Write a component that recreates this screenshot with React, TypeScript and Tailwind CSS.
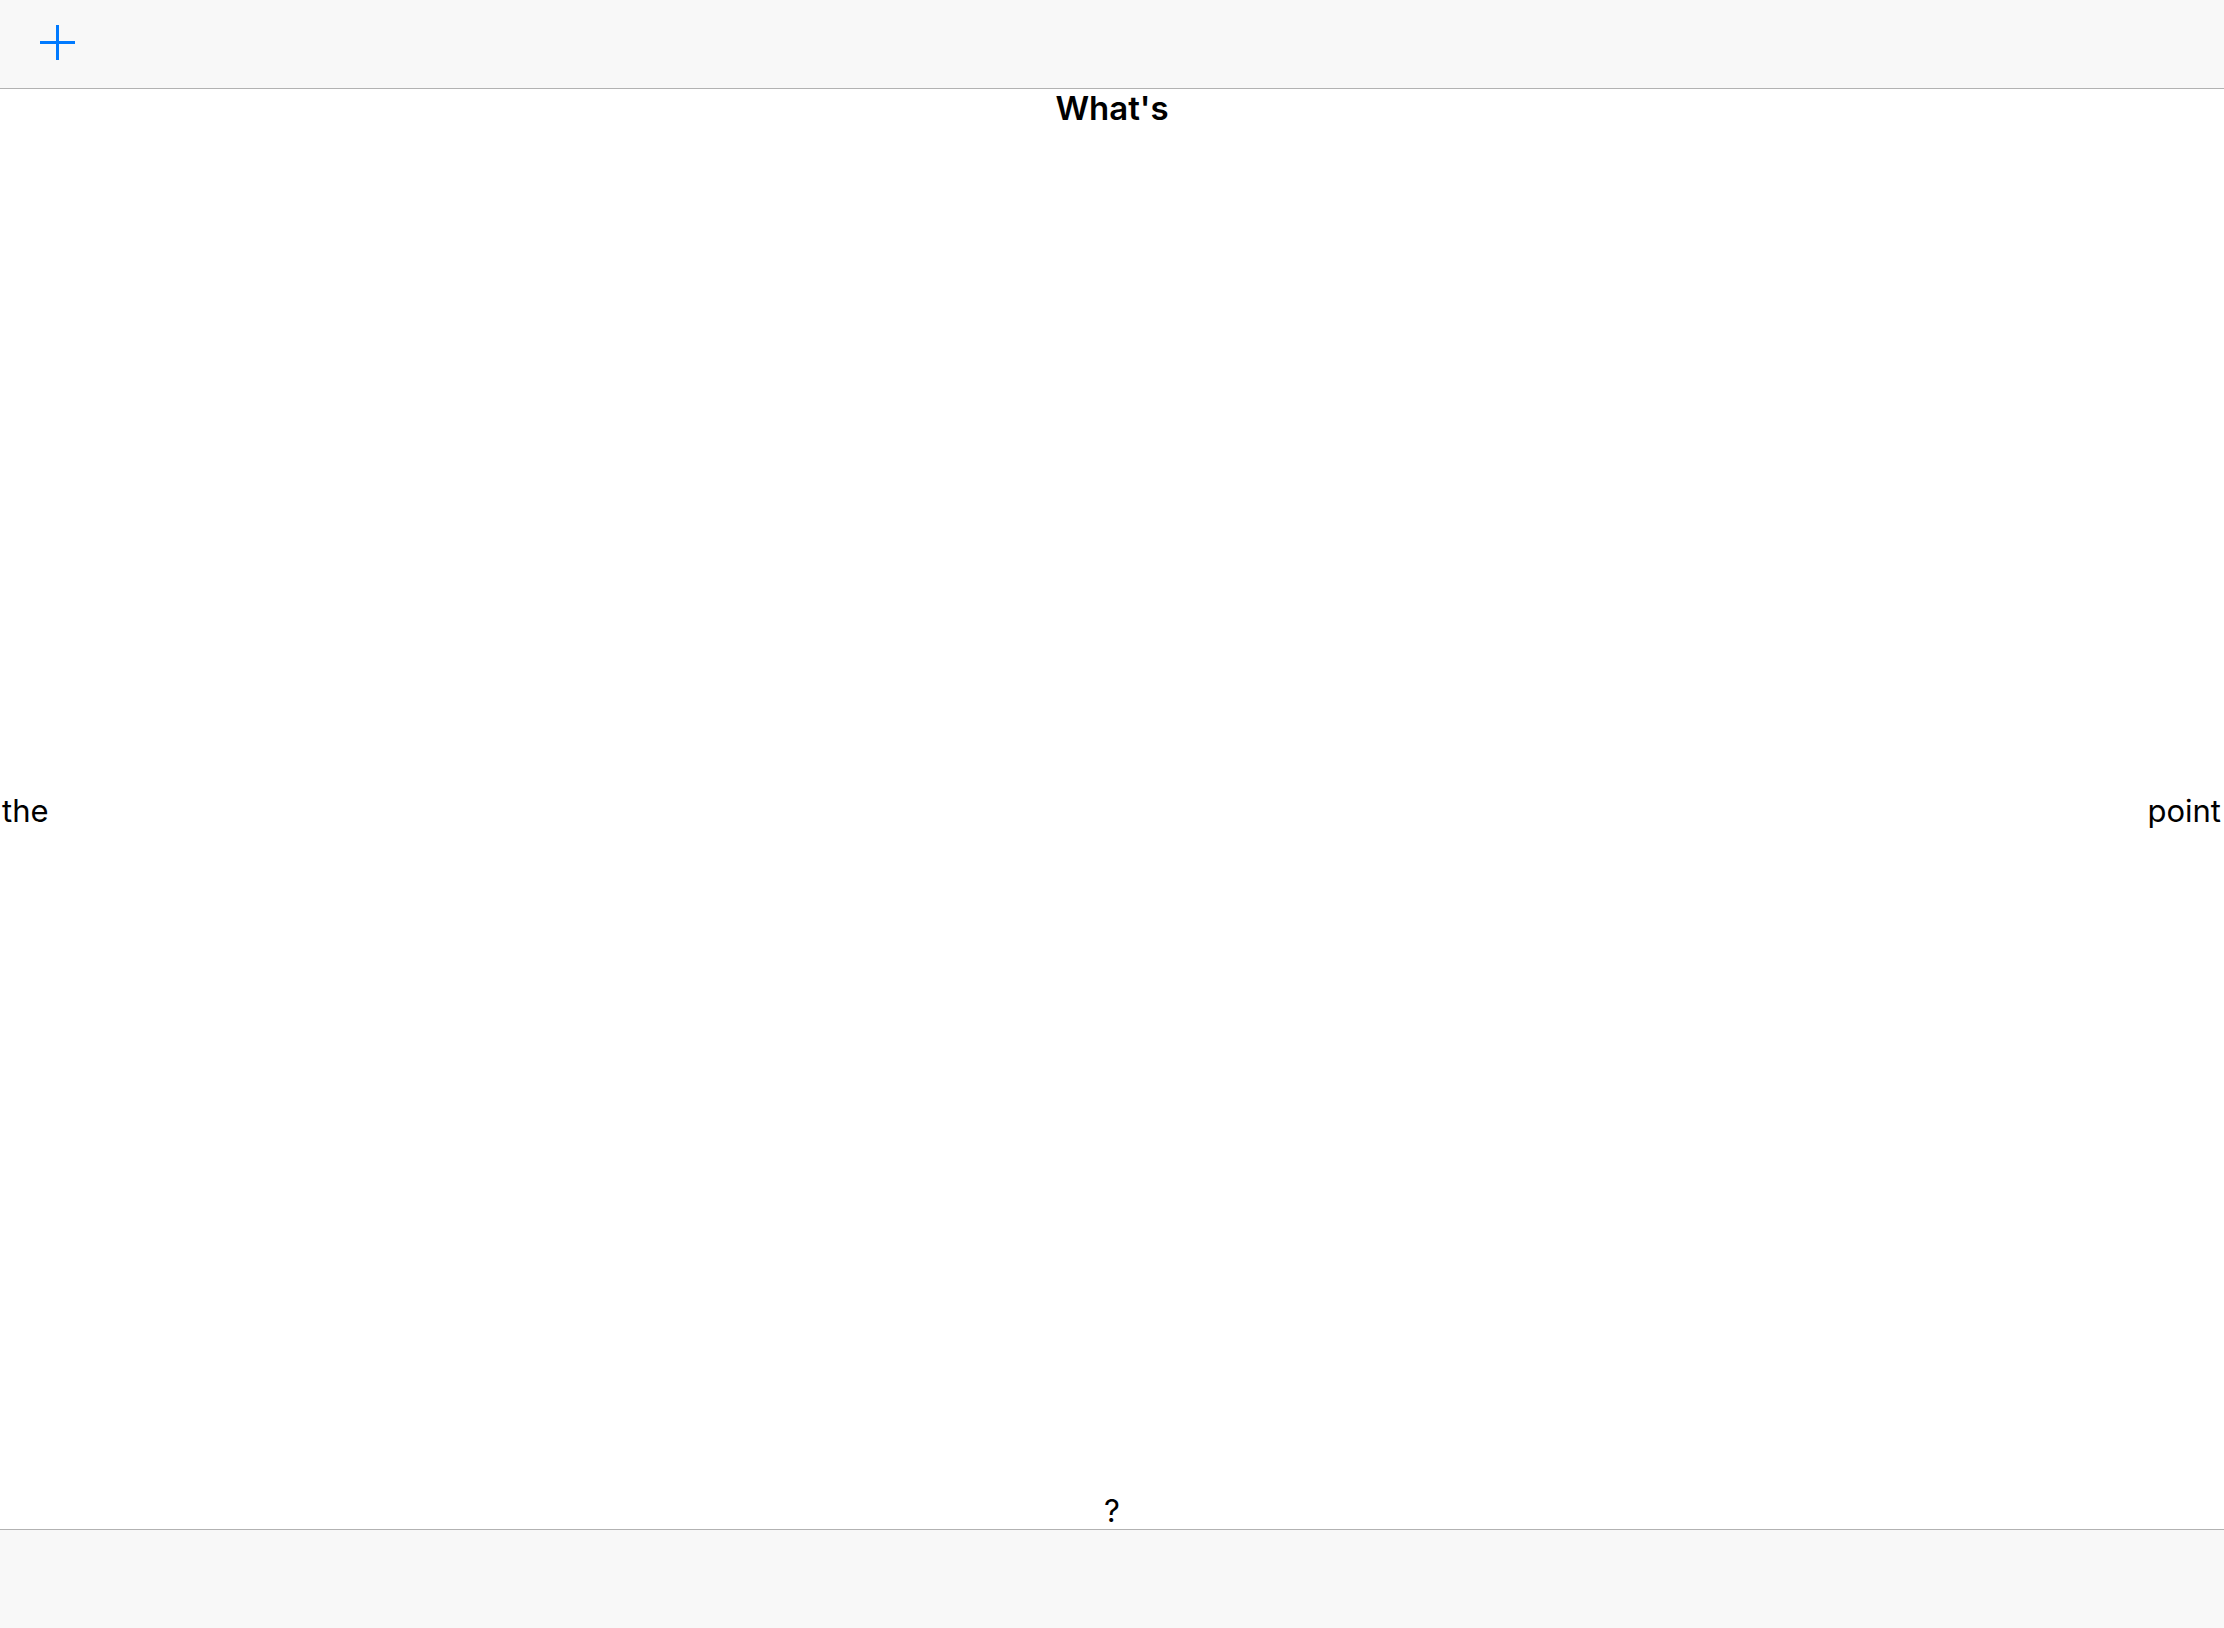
import React from 'react'

function PlusIcon() {
  return (
    <svg width="35" height="35" viewBox="0 0 35 35" className="block">
      <rect x="16" y="0" width="3" height="35" fill="#007aff" />
      <rect x="0" y="16" width="35" height="3" fill="#007aff" />
    </svg>
  )
}

export default function App() {
  return (
    <div className="h-screen w-full flex flex-col bg-white text-black font-['Inter',sans-serif]">
      {/* Top bar */}
      <div className="h-[89px] shrink-0 bg-[#f8f8f8] border-b border-[#b2b2b2] flex items-center">
        <button className="ml-[40px] mt-[-4px]">
          <PlusIcon />
        </button>
      </div>

      {/* Content */}
      <div className="flex-1 flex flex-col">
        <div className="text-center text-[33px] font-semibold leading-[1.15] pt-[1px]">What's</div>
        <div className="flex-1 flex items-center justify-between text-[31px] leading-[1.15]">
          <span className="pl-[2px]">the</span>
          <span className="pr-[3px]">point</span>
        </div>
        <div className="text-center text-[31px] leading-[1.15]">?</div>
      </div>

      {/* Bottom bar */}
      <div className="h-[99px] shrink-0 bg-[#f8f8f8] border-t border-[#b2b2b2]" />
    </div>
  )
}
